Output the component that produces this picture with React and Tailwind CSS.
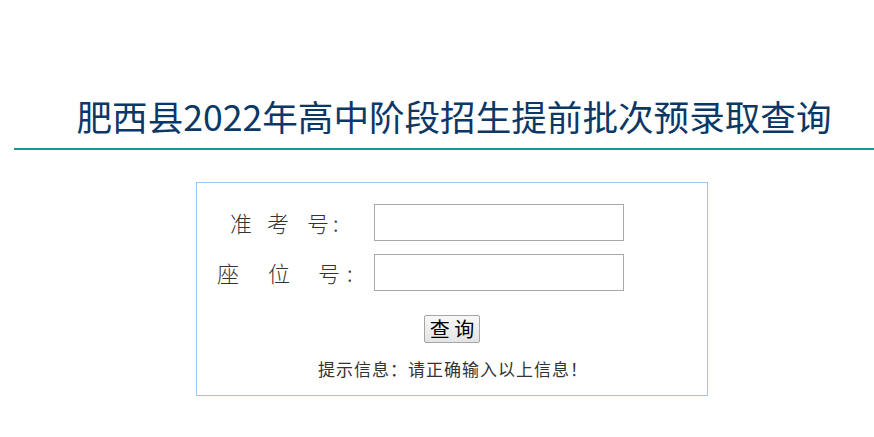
const sans = { fontFamily: '"Microsoft YaHei", "Noto Sans CJK SC", "Noto Sans", sans-serif' };

const App = () => {
    return (
        <div className="w-[874px] h-[437px] bg-white overflow-hidden" style={sans}>
            <div className="ml-[14px] pt-[90px]">
                <h1 className="pl-[20px] text-center text-[35.6px] leading-[52px] text-[#0c3866]">
                    肥西县2022年高中阶段招生提前批次预录取查询
                </h1>
                <div className="mt-[6px] h-[2px] bg-[#129a9b]" />
            </div>

            <div className="ml-[196px] mt-[32px] w-[512px] h-[214px] border border-[#9cc6ee] pt-[21px]">
                {/* 准考号 */}
                <div className="flex items-center h-[37px]">
                    <div className="w-[177px] pl-[33px] flex items-center text-[22px] text-[#333] font-light">
                        <span className="w-[37px]">准</span>
                        <span className="w-[40px]">考</span>
                        <span className="w-[26px]">号</span>
                        <span>:</span>
                    </div>
                    <input type="text" className="w-[250px] h-[37px] border border-[#a9a9a9] outline-none px-1" />
                </div>
                {/* 座位号 */}
                <div className="flex items-center h-[37px] mt-[13px]">
                    <div className="w-[177px] pl-[20px] flex items-center text-[22px] text-[#333] font-light">
                        <span className="w-[51px]">座</span>
                        <span className="w-[50px]">位</span>
                        <span className="w-[29px]">号</span>
                        <span>:</span>
                    </div>
                    <input type="text" className="w-[250px] h-[37px] border border-[#a9a9a9] outline-none px-1" />
                </div>

                <div className="flex justify-center mt-[24px]">
                    <button className="w-[56px] h-[28px] border border-[#a6a6a6] rounded-[2px] bg-gradient-to-b from-[#f8f8f8] to-[#e4e4e4] text-[20px] leading-none text-black">
                        查 询
                    </button>
                </div>

                <p className="mt-[15px] ml-[121px] text-[17px] leading-[22px] tracking-[1px] text-[#333]">
                    提示信息：请正确输入以上信息！
                </p>
            </div>
        </div>
    );
};

export default App;
